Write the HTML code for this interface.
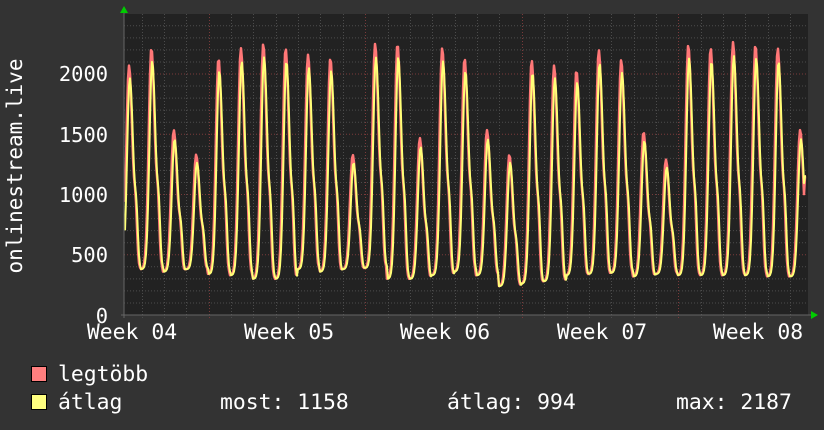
<!DOCTYPE html>
<html><head><meta charset="utf-8"><style>
html,body{margin:0;padding:0;background:#333;}
body{width:824px;height:430px;overflow:hidden;position:relative;font-family:"DejaVu Sans Mono",monospace;color:#fff;}
svg{position:absolute;left:0;top:0}
</style></head><body>
<svg id="g" width="824" height="430" xmlns="http://www.w3.org/2000/svg">
<rect x="0" y="0" width="824" height="430" fill="#333"/>
<rect x="124" y="14" width="684" height="301" fill="#222"/>
<g id="grid"></g>
<g id="data"></g>
<line x1="124" y1="12" x2="124" y2="318" stroke="#666" stroke-width="1"/>
<line x1="121" y1="315" x2="812" y2="315" stroke="#666" stroke-width="1"/>
<polygon points="120,13 128,13 124,6" fill="#0c0"/>
<polygon points="811,311 811,319 818,315" fill="#0c0"/>
<g font-family="DejaVu Sans Mono, monospace" font-size="20.4" fill="#fff">
<text x="108" y="81" text-anchor="end">2000</text>
<text x="108" y="142" text-anchor="end">1500</text>
<text x="108" y="202" text-anchor="end">1000</text>
<text x="108" y="262" text-anchor="end">500</text>
<text x="108" y="323" text-anchor="end">0</text>
</g>
<g font-family="DejaVu Sans Mono, monospace" font-size="21.4" fill="#fff">
<text x="132" y="339" text-anchor="middle">Week 04</text>
<text x="289" y="339" text-anchor="middle">Week 05</text>
<text x="445" y="339" text-anchor="middle">Week 06</text>
<text x="602" y="339" text-anchor="middle">Week 07</text>
<text x="758" y="339" text-anchor="middle">Week 08</text>
<text x="58" y="381">legtöbb</text>
<text x="58" y="409">átlag</text>
<text x="220" y="409">most: 1158</text>
<text x="447" y="409">átlag: 994</text>
<text x="676" y="409">max: 2187</text>
</g>
<text transform="translate(22,166) rotate(-90)" text-anchor="middle" font-family="DejaVu Sans Mono, monospace" font-size="21" fill="#fff">onlinestream.live</text>
<rect x="31.5" y="366.5" width="15" height="15" fill="#ff7f7f" stroke="#000"/>
<rect x="31.5" y="394.5" width="15" height="15" fill="#ffff7f" stroke="#000"/>
</svg>
<script>
var NS="http://www.w3.org/2000/svg";
var grid=document.getElementById("grid"),data=document.getElementById("data");
function ln(x1,y1,x2,y2,c){var l=document.createElementNS(NS,"line");l.setAttribute("x1",x1);l.setAttribute("y1",y1);l.setAttribute("x2",x2);l.setAttribute("y2",y2);l.setAttribute("stroke",c);l.setAttribute("stroke-dasharray","1,2");grid.appendChild(l);}
function Y(v){return 315-v*0.1205;}
for(var v=100;v<=2400;v+=100){var y=Y(v);if(y<14)break;ln(124,y,808,y,v%500==0?"#7a3a3a":"#4c4c4c");}
for(var x=141.5;x<808;x+=22.37){var wk=Math.abs(((x-209)/156.6)-Math.round((x-209)/156.6))<0.02;ln(Math.round(x)+0.5,14,Math.round(x)+0.5,318,wk?"#7a3a3a":"#4c4c4c");}
var peaks=[2070,2215,1535,1330,2130,2215,2250,2215,2160,2130,1330,2250,2250,1470,2215,2130,1535,1330,2115,2070,2030,2200,2115,1520,1290,2240,2215,2265,2240,2215,1535];
var troughs=[380,380,360,380,340,330,300,300,380,360,380,390,300,300,330,360,330,240,260,280,330,340,350,320,340,330,330,330,330,320,320];
var x0=129-0.5*22.37,dx=22.37;
function val(x,k){var t=(x-x0)/dx;var i=Math.floor(t);var f=t-i;if(i<0)i=0;if(i>=peaks.length)i=peaks.length-1;
 var p=peaks[i]*k,b=troughs[i];
 var d=f-0.5;var bump=Math.exp(-Math.pow(d/(d<0?0.17:0.22),2));
 var sh=0.2*Math.exp(-Math.pow((f-0.8)/0.09,2));
 return b+(p-b)*Math.min(1,bump+sh);}
function path(k,off,col,w){var d="";for(var x=125;x<=806;x+=1){var v=val(x+off,k);if(x>=805)v=1150;d+=(d?"L":"M")+x+","+Y(v).toFixed(1);}
 var p=document.createElementNS(NS,"path");p.setAttribute("d",d);p.setAttribute("fill","none");p.setAttribute("stroke",col);p.setAttribute("stroke-width",w);p.setAttribute("stroke-linejoin","round");data.appendChild(p);}
path(1,0,"#ff7777",2.5);
path(0.95,-0.8,"#ffff77",2);
</script>
</body></html>
